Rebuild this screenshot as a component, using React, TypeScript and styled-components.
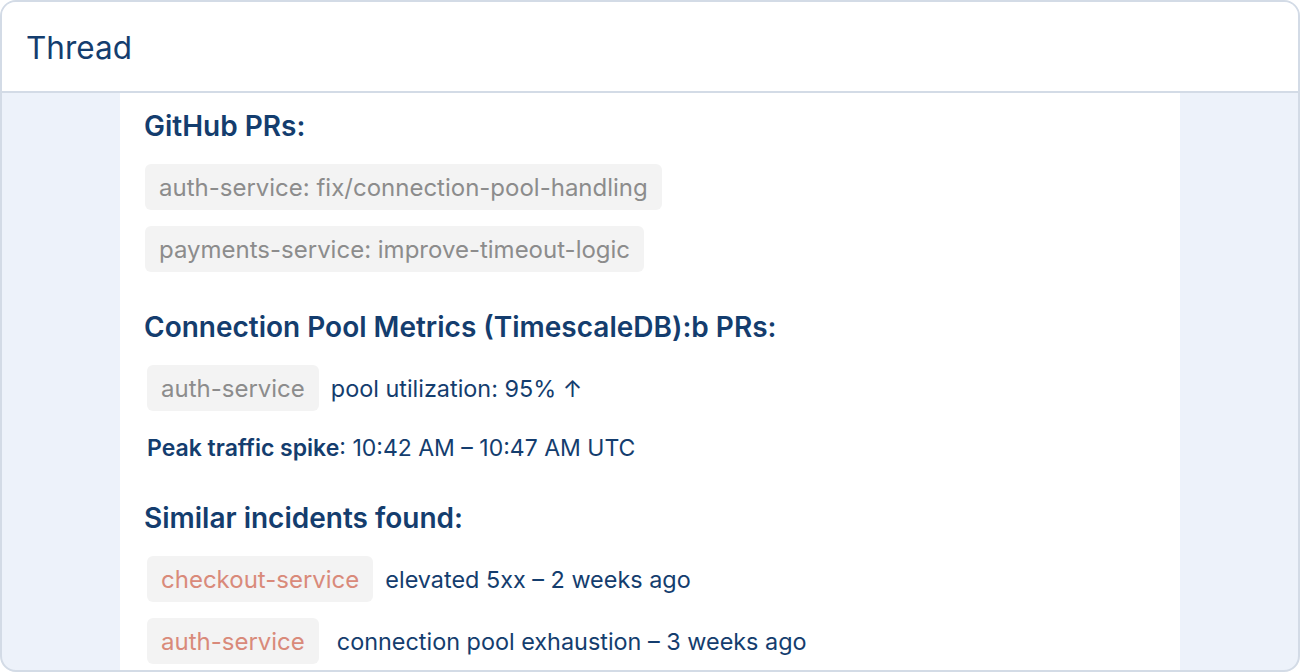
import React from "react";
import styled, { createGlobalStyle } from "styled-components";

const GlobalStyle = createGlobalStyle`
  html, body {
    margin: 0;
    padding: 0;
    background: #ffffff;
  }
  body {
    font-family: Inter, "Noto Sans", sans-serif;
  }
`;

type Tone = "muted" | "alert";

const Frame = styled.div`
  box-sizing: border-box;
  width: 1300px;
  height: 672px;
  border: 2px solid #d3dbe6;
  border-radius: 16px;
  overflow: hidden;
  display: flex;
  flex-direction: column;
  background: #edf2fa;
`;

const Header = styled.header`
  box-sizing: border-box;
  height: 91px;
  flex-shrink: 0;
  display: flex;
  align-items: center;
  padding: 2px 24px 0 24px;
  background: #ffffff;
  border-bottom: 2px solid #d3dbe6;
`;

const Title = styled.h1`
  margin: 0;
  font-size: 31.5px;
  font-weight: 400;
  color: #143d6e;
`;

const Body = styled.div`
  flex: 1;
  min-height: 0;
  display: flex;
  justify-content: center;
  padding: 0 118px;
`;

const Column = styled.main`
  flex: 1;
  background: #ffffff;
  padding: 16px 24px 0 25px;
  display: flex;
  flex-direction: column;
  overflow: hidden;
`;

const Section = styled.section`
  display: flex;
  flex-direction: column;
  gap: 16px;
  margin-bottom: 38px;
`;

const Heading = styled.h2`
  margin: 0 0 5px -1px;
  font-size: 28px;
  font-weight: 600;
  color: #143d6e;
  line-height: 34px;
`;

const Chip = styled.span<{ $tone: Tone }>`
  display: inline-flex;
  align-items: center;
  align-self: flex-start;
  height: 46px;
  padding: 0 14px;
  border-radius: 6px;
  background: #f3f3f3;
  font-size: 24px;
  color: ${(p) => (p.$tone === "alert" ? "#d98a7a" : "#8c8c8c")};
`;

const Row = styled.div<{ $gap?: number }>`
  display: flex;
  align-items: center;
  gap: ${(p) => p.$gap ?? 12}px;
  padding-left: 2px;
`;

const Note = styled.span`
  font-size: 23.4px;
  color: #143d6e;
`;

const Line = styled.p`
  margin: 6px 0 0 0;
  padding-left: 2px;
  font-size: 23px;
  color: #143d6e;
  line-height: 30px;

  strong {
    font-weight: 600;
  }
`;

const prs = [
  "auth-service: fix/connection-pool-handling",
  "payments-service: improve-timeout-logic",
];

const incidents = [
  { service: "checkout-service", text: "elevated 5xx – 2 weeks ago", gap: 12 },
  { service: "auth-service", text: "connection pool exhaustion – 3 weeks ago", gap: 18 },
];

const App = () => {
  return (
    <>
      <GlobalStyle />
      <Frame>
        <Header>
          <Title>Thread</Title>
        </Header>
        <Body>
          <Column>
            <Section>
              <Heading>GitHub PRs:</Heading>
              {prs.map((pr) => (
                <Chip key={pr} $tone="muted">
                  {pr}
                </Chip>
              ))}
            </Section>
            <Section>
              <Heading>Connection Pool Metrics (TimescaleDB):b PRs:</Heading>
              <Row>
                <Chip $tone="muted">auth-service</Chip>
                <Note>pool utilization: 95% ↑</Note>
              </Row>
              <Line>
                <strong>Peak traffic spike</strong>: 10:42 AM – 10:47 AM UTC
              </Line>
            </Section>
            <Section>
              <Heading>Similar incidents found:</Heading>
              {incidents.map((i) => (
                <Row key={i.service + i.text} $gap={i.gap}>
                  <Chip $tone="alert">{i.service}</Chip>
                  <Note>{i.text}</Note>
                </Row>
              ))}
            </Section>
          </Column>
        </Body>
      </Frame>
    </>
  );
};

export default App;
